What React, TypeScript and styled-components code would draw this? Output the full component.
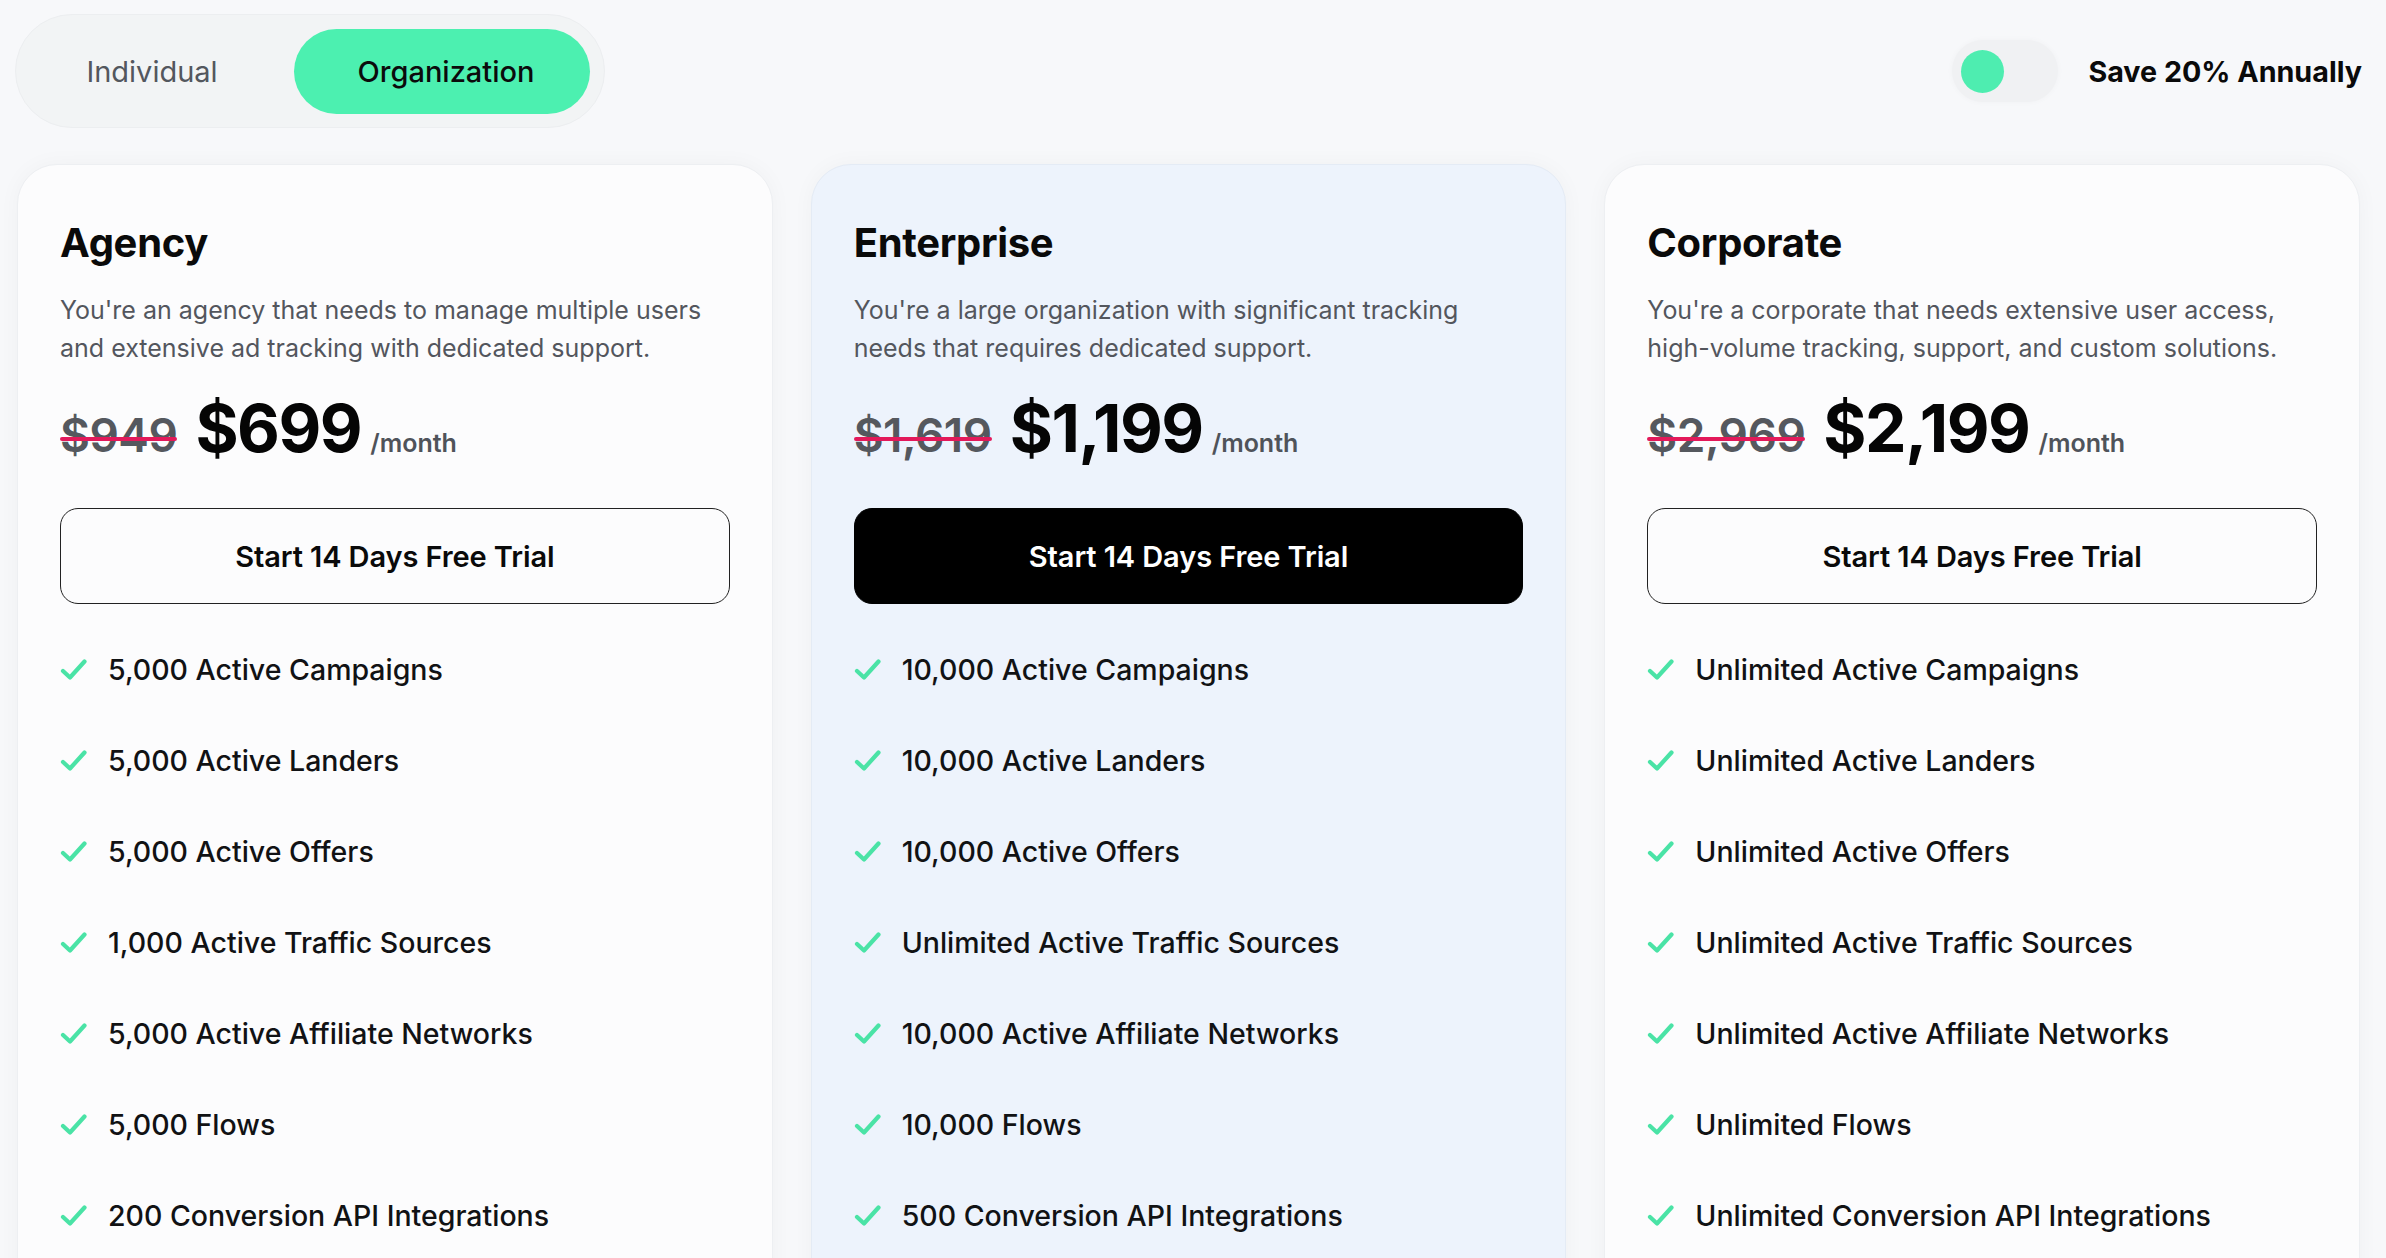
import React from "react";
import styled, { createGlobalStyle } from "styled-components";

const GlobalStyle = createGlobalStyle`
  html, body {
    margin: 0;
    padding: 0;
    background: #f7f8fa;
    font-family: Inter, "Noto Sans", "Liberation Sans", sans-serif;
    color: #0b0b0c;
    -webkit-font-smoothing: antialiased;
  }
  body { height: 1258px; overflow: hidden; }
  * { box-sizing: border-box; }
`;

const Page = styled.div`
  padding: 14px 24px 0 17px;
`;

const Header = styled.div`
  display: flex;
  align-items: center;
  justify-content: space-between;
  height: 114px;
`;

const Segmented = styled.div`
  display: flex;
  align-items: center;
  gap: 20px;
  height: 114px;
  padding: 14px;
  margin-left: -2px;
  border-radius: 57px;
  background: #f2f4f5;
  border: 1px solid #eceef0;
`;

const SegButton = styled.button<{ $active?: boolean; $w: number }>`
  width: ${(p) => p.$w}px;
  height: 85px;
  border: none;
  border-radius: 43px;
  padding: 0 0 0 ${(p) => (p.$active ? 8 : 0)}px;
  background: ${(p) => (p.$active ? "#4cf0b0" : "transparent")};
  color: ${(p) => (p.$active ? "#0b0b0c" : "#53575e")};
  font-family: inherit;
  font-size: 29px;
  font-weight: ${(p) => (p.$active ? 500 : 400)};
  cursor: pointer;
`;

const SaveGroup = styled.div`
  display: flex;
  align-items: center;
  gap: 30px;
`;

const Track = styled.div`
  width: 106px;
  height: 62px;
  border-radius: 31px;
  background: #f0f1f3;
  box-shadow: 0 0 6px rgba(0, 0, 0, 0.03);
  display: flex;
  align-items: center;
  padding-left: 9px;
`;

const Knob = styled.div`
  width: 43px;
  height: 43px;
  border-radius: 50%;
  background: #4eedb0;
`;

const SaveLabel = styled.span`
  font-size: 28.7px;
  font-weight: 700;
  color: #0a0a0a;
`;

const Cards = styled.div`
  display: grid;
  grid-template-columns: repeat(3, 1fr);
  gap: 38px;
  margin-top: 36px;
  margin-right: 2px;
`;

const Card = styled.div<{ $featured?: boolean }>`
  border-radius: 40px;
  background: ${(p) => (p.$featured ? "#edf3fc" : "#fcfcfd")};
  border: 1px solid ${(p) => (p.$featured ? "#e4ebf5" : "#edeff2")};
  box-shadow: 0 0 22px rgba(20, 30, 50, 0.035);
  padding: 54px 42px 60px;
  display: flex;
  flex-direction: column;
  min-height: 1200px;
`;

const Title = styled.h2`
  margin: 0;
  font-size: 40px;
  line-height: 48px;
  font-weight: 700;
  letter-spacing: -0.3px;
  color: #0a0a0a;
`;

const Desc = styled.p`
  margin: 24px 0 0;
  font-size: 25px;
  line-height: 38px;
  color: #53565d;
  font-weight: 400;
`;

const PriceRow = styled.div`
  display: flex;
  align-items: baseline;
  margin-top: 21px;
  height: 72px;
`;

const OldPrice = styled.span`
  position: relative;
  font-size: 46px;
  font-weight: 600;
  color: #55585e;
  letter-spacing: -0.5px;
  margin-right: 18px;
  &::after {
    content: "";
    position: absolute;
    left: 0;
    right: 0;
    top: 54%;
    height: 4px;
    border-radius: 2px;
    background: #e3195a;
  }
`;

const NewPrice = styled.span`
  font-size: 66px;
  font-weight: 700;
  letter-spacing: -1.5px;
  color: #050505;
  margin-right: 9px;
`;

const PerMonth = styled.span`
  font-size: 25px;
  font-weight: 600;
  color: #4f535a;
`;

const TrialButton = styled.button<{ $dark?: boolean }>`
  margin-top: 48px;
  width: 100%;
  height: 96px;
  border-radius: 18px;
  border: 1.5px solid ${(p) => (p.$dark ? "#000" : "#222")};
  background: ${(p) => (p.$dark ? "#000" : "transparent")};
  color: ${(p) => (p.$dark ? "#fff" : "#0a0a0a")};
  font-family: inherit;
  font-size: 29px;
  font-weight: 600;
  letter-spacing: -0.1px;
  cursor: pointer;
`;

const Features = styled.ul`
  list-style: none;
  margin: 20px 0 0;
  padding: 0;
`;

const Feature = styled.li`
  display: flex;
  align-items: center;
  gap: 21px;
  height: 91px;
  font-size: 28.5px;
  font-weight: 500;
  color: #111214;
`;

const CheckIcon = () => (
  <svg width="27" height="23" viewBox="0 0 27 23" fill="none">
    <path
      d="M3 13 L10 19.5 L24.5 3.5"
      stroke="#4ae3a6"
      strokeWidth="4.2"
      strokeLinecap="round"
      strokeLinejoin="round"
    />
  </svg>
);

type Plan = {
  name: string;
  desc: string;
  old: string;
  price: string;
  featured?: boolean;
  features: string[];
};

const plans: Plan[] = [
  {
    name: "Agency",
    desc: "You're an agency that needs to manage multiple users and extensive ad tracking with dedicated support.",
    old: "$949",
    price: "$699",
    features: [
      "5,000 Active Campaigns",
      "5,000 Active Landers",
      "5,000 Active Offers",
      "1,000 Active Traffic Sources",
      "5,000 Active Affiliate Networks",
      "5,000 Flows",
      "200 Conversion API Integrations",
    ],
  },
  {
    name: "Enterprise",
    desc: "You're a large organization with significant tracking needs that requires dedicated support.",
    old: "$1,619",
    price: "$1,199",
    featured: true,
    features: [
      "10,000 Active Campaigns",
      "10,000 Active Landers",
      "10,000 Active Offers",
      "Unlimited Active Traffic Sources",
      "10,000 Active Affiliate Networks",
      "10,000 Flows",
      "500 Conversion API Integrations",
    ],
  },
  {
    name: "Corporate",
    desc: "You're a corporate that needs extensive user access, high-volume tracking, support, and custom solutions.",
    old: "$2,969",
    price: "$2,199",
    features: [
      "Unlimited Active Campaigns",
      "Unlimited Active Landers",
      "Unlimited Active Offers",
      "Unlimited Active Traffic Sources",
      "Unlimited Active Affiliate Networks",
      "Unlimited Flows",
      "Unlimited Conversion API Integrations",
    ],
  },
];

export default function App() {
  return (
    <>
      <GlobalStyle />
      <Page>
        <Header>
          <Segmented>
            <SegButton $w={244}>Individual</SegButton>
            <SegButton $w={296} $active>
              Organization
            </SegButton>
          </Segmented>
          <SaveGroup>
            <Track>
              <Knob />
            </Track>
            <SaveLabel>Save 20% Annually</SaveLabel>
          </SaveGroup>
        </Header>
        <Cards>
          {plans.map((p) => (
            <Card key={p.name} $featured={p.featured}>
              <Title>{p.name}</Title>
              <Desc>{p.desc}</Desc>
              <PriceRow>
                <OldPrice>{p.old}</OldPrice>
                <NewPrice>{p.price}</NewPrice>
                <PerMonth>/month</PerMonth>
              </PriceRow>
              <TrialButton $dark={p.featured}>Start 14 Days Free Trial</TrialButton>
              <Features>
                {p.features.map((f) => (
                  <Feature key={f}>
                    <CheckIcon />
                    {f}
                  </Feature>
                ))}
              </Features>
            </Card>
          ))}
        </Cards>
      </Page>
    </>
  );
}
